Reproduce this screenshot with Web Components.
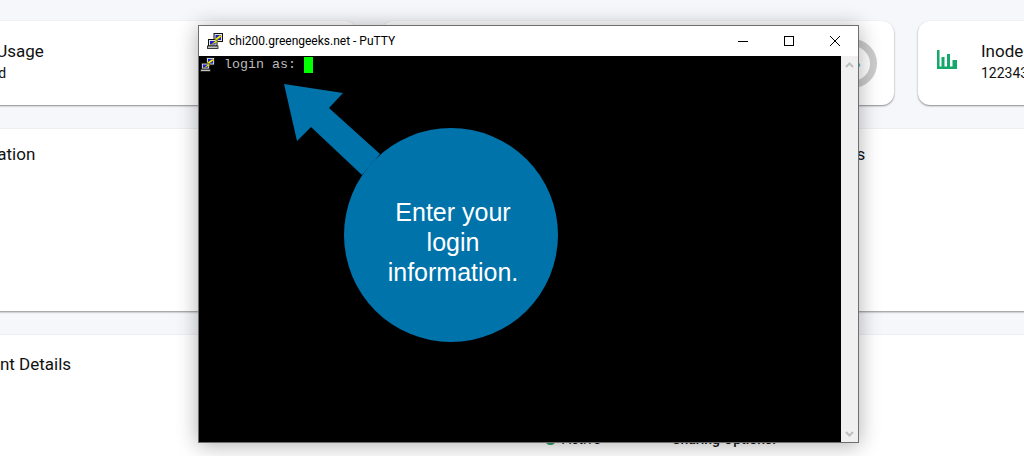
<!DOCTYPE html>
<html>
<head>
<meta charset="utf-8">
<title>PuTTY login</title>
<style>
  html, body { margin: 0; height: 456px; overflow: hidden; background: #f6f7fb; }
  body { font-family: Roboto, "Liberation Sans", sans-serif; color: #111; position: relative; }
</style>
</head>
<body>
<dash-board>
  <stat-card title="Data Quota Usage" sub="1024.0 KB Used"></stat-card>
  <stat-card title="Bandwidth Usage" sub="0 MB Used" ring="5%"></stat-card>
  <stat-card title="Inode Usage" sub="1223430 Used" icon="bars"></stat-card>
  <info-card slot="wide-left" title="Site Information" style="--pad: 70px"></info-card>
  <info-card slot="wide-right" title="Server Statistics" style="--pad: 93px"></info-card>
  <info-card slot="full" title="Account Details" style="--pad: 108px; --top: 19px">
    <detail-row></detail-row>
  </info-card>
</dash-board>

<putty-window caption="chi200.greengeeks.net - PuTTY"></putty-window>
<call-out>Enter your<br>login<br>information.</call-out>

<script>
class DashBoard extends HTMLElement {
  constructor() {
    super();
    this.attachShadow({ mode: 'open' });
    this.shadowRoot.innerHTML = `
      <style>
        :host {
          display: grid;
          grid-template-columns: repeat(3, 513px);
          gap: 24px;
          width: 1587px;
          margin-left: -156px;
          padding-top: 21px;
        }
        .half {
          grid-column: 1 / -1;
          display: grid;
          grid-template-columns: 1fr 1fr;
          gap: 24px;
        }
        .full { grid-column: 1 / -1; }
      </style>
      <slot></slot>
      <div class="half">
        <slot name="wide-left"></slot>
        <slot name="wide-right"></slot>
      </div>
      <div class="full"><slot name="full"></slot></div>
    `;
  }
}
customElements.define('dash-board', DashBoard);

class StatCard extends HTMLElement {
  constructor() {
    super();
    this.attachShadow({ mode: 'open' });
  }

  connectedCallback() {
    const title = this.getAttribute('title') || '';
    const sub = this.getAttribute('sub') || '';
    const ring = this.getAttribute('ring');
    const bars = this.getAttribute('icon') === 'bars';

    this.shadowRoot.innerHTML = `
      <style>
        :host {
          display: flex;
          align-items: center;
          box-sizing: border-box;
          height: 84px;
          padding: 0 17px 3px 19px;
          background: #fff;
          border-radius: 12px;
          box-shadow: 0 1px 2px rgba(0, 0, 0, 0.45);
        }
        .icon { width: 20px; height: 20px; margin: 0 24px 6px 0; flex: none; }
        .title { font-size: 17px; line-height: 22px; }
        .sub { font-size: 14px; line-height: 22px; }
        .ring {
          margin: 3px 0 0 auto;
          box-sizing: border-box;
          width: 49px;
          height: 49px;
          border: 7px solid #ccc;
          border-radius: 50%;
          display: flex;
          align-items: center;
          justify-content: center;
          font-size: 12px;
          color: #1a8fb0;
        }
      </style>
      <svg class="icon" viewBox="0 0 20 20" fill="#14a86a">
        ${bars ? '<path d="M0 1h2.5v16.5H20V20H0z"/><rect x="4.5" y="8" width="3" height="10"/><rect x="10" y="5" width="3" height="13"/><rect x="15.5" y="11" width="4.5" height="7"/>' : ''}
      </svg>
      <div>
        <div class="title">${title}</div>
        <div class="sub">${sub}</div>
      </div>
      ${ring ? `<div class="ring">${ring}</div>` : ''}
    `;
  }
}
customElements.define('stat-card', StatCard);

class InfoCard extends HTMLElement {
  constructor() {
    super();
    this.attachShadow({ mode: 'open' });
  }

  connectedCallback() {
    const title = this.getAttribute('title') || '';
    this.shadowRoot.innerHTML = `
      <style>
        :host {
          display: block;
          box-sizing: border-box;
          min-height: 182px;
          padding: var(--top, 15px) 0 0 var(--pad, 24px);
          background: #fff;
          box-shadow: 0 1px 2px rgba(0, 0, 0, 0.45);
        }
        .title { font-size: 17px; line-height: 20px; }
      </style>
      <div class="title">${title}</div>
      <slot></slot>
    `;
  }
}
customElements.define('info-card', InfoCard);

class DetailRow extends HTMLElement {
  constructor() {
    super();
    this.attachShadow({ mode: 'open' });
    this.shadowRoot.innerHTML = `
      <style>
        :host {
          display: flex;
          align-items: center;
          margin: 55px 0 0 593px;
          font-size: 14px;
          line-height: 20px;
        }
        .dot {
          width: 11px;
          height: 11px;
          border-radius: 50%;
          background: #2e9e62;
          margin-right: 6px;
        }
        .label { width: 110px; }
        .strong { font-weight: 500; }
      </style>
      <span class="dot"></span>
      <span class="label">Active</span>
      <span class="strong">Sharing Options:</span>
    `;
  }
}
customElements.define('detail-row', DetailRow);

class PuttyWindow extends HTMLElement {
  constructor() {
    super();
    this.attachShadow({ mode: 'open' });
  }

  connectedCallback() {
    const caption = this.getAttribute('caption') || '';
    // the little two-computers-and-a-bolt icon, used twice
    const logo = `
      <rect x="7" y="0.5" width="8.5" height="8" fill="#e4e4e4" stroke="#111" stroke-width="1"/>
      <rect x="8.5" y="2" width="5.5" height="5" fill="#1420d0"/>
      <rect x="1.5" y="6.5" width="8.5" height="6.5" fill="#e4e4e4" stroke="#111" stroke-width="1"/>
      <rect x="3" y="8" width="5.5" height="3.5" fill="#1420d0"/>
      <rect x="0.5" y="13" width="10.5" height="2.5" fill="#c4c4c4" stroke="#111" stroke-width="0.8"/>
      <path d="M13 2 L7.5 6.5 L9.5 7 L3 12.5 L11 8.6 L9 7.8 L14.5 3.5z" fill="#fff200" stroke="#5a5400" stroke-width="0.3"/>
    `;
    this.shadowRoot.innerHTML = `
      <style>
        :host {
          position: absolute;
          left: 198px;
          top: 25px;
          width: 661px;
          height: 418px;
          box-sizing: border-box;
          display: flex;
          flex-direction: column;
          background: #fff;
          border: 1px solid #6e6e6e;
          box-shadow: 0 2px 20px rgba(0, 0, 0, 0.32);
        }
        .bar {
          flex: none;
          height: 30px;
          display: flex;
          align-items: center;
          padding-left: 8px;
          font: 12px Roboto, "Open Sans", sans-serif;
          color: #000;
        }
        .bar svg.logo { width: 16px; height: 16px; margin-right: 6px; }
        .caption { flex: 1; white-space: nowrap; }
        .ctl { width: 46px; height: 30px; display: flex; align-items: center; justify-content: center; }
        .ctl svg { width: 10px; height: 10px; display: block; }
        .body { flex: 1; display: flex; min-height: 0; }
        .term {
          flex: 1;
          background: #000;
          color: #bbb;
          display: flex;
          align-items: flex-start;
          padding: 1px 0 0 1px;
          font: 13.33px/16px "Liberation Mono", monospace;
        }
        .term svg { width: 15px; height: 15px; margin-right: 9px; flex: none; }
        .term pre { margin: 0; font: inherit; }
        .cursor { width: 9px; height: 16px; background: #00ff00; flex: none; }
        .scroll {
          flex: none;
          width: 17px;
          background: #f0f0f0;
          display: flex;
          flex-direction: column;
          justify-content: space-between;
          align-items: center;
          padding: 6px 0 5px;
        }
        .scroll svg { width: 9px; height: 6px; display: block; }
      </style>
      <div class="bar">
        <svg class="logo" viewBox="0 0 16 16">${logo}</svg>
        <span class="caption">${caption}</span>
        <span class="ctl"><svg viewBox="0 0 10 10"><path d="M0 5.5h10" stroke="#000"/></svg></span>
        <span class="ctl"><svg viewBox="0 0 10 10"><rect x="0.5" y="0.5" width="9" height="9" fill="none" stroke="#000"/></svg></span>
        <span class="ctl"><svg viewBox="0 0 10 10"><path d="M0 0L10 10M10 0L0 10" stroke="#000" stroke-width="1"/></svg></span>
      </div>
      <div class="body">
        <div class="term">
          <svg viewBox="0 0 16 16">${logo}</svg>
          <pre>login as: </pre>
          <span class="cursor"></span>
        </div>
        <div class="scroll">
          <svg viewBox="0 0 9 6"><path d="M1 5L4.5 1.5L8 5" fill="none" stroke="#c0c0c0" stroke-width="2"/></svg>
          <svg viewBox="0 0 9 6"><path d="M1 1L4.5 4.5L8 1" fill="none" stroke="#c0c0c0" stroke-width="2"/></svg>
        </div>
      </div>
    `;
  }
}
customElements.define('putty-window', PuttyWindow);

class CallOut extends HTMLElement {
  constructor() {
    super();
    this.attachShadow({ mode: 'open' });
    this.shadowRoot.innerHTML = `
      <style>
        :host {
          position: absolute;
          left: 284px;
          top: 84px;
          width: 274px;
          height: 258px;
        }
        svg { position: absolute; inset: 0; width: 100%; height: 100%; }
        .text {
          position: absolute;
          left: 62px;
          top: 113px;
          width: 214px;
          text-align: center;
          font: 25px/30px "Liberation Sans", Arial, sans-serif;
          color: #fff;
        }
      </style>
      <svg viewBox="0 0 274 258" fill="#0073aa">
        <path d="M0 0L59 9L45 24L96 70L78 91L27 43L13 57z"/>
        <circle cx="167" cy="151" r="107"/>
      </svg>
      <div class="text"><slot></slot></div>
    `;
  }
}
customElements.define('call-out', CallOut);
</script>
</body>
</html>
